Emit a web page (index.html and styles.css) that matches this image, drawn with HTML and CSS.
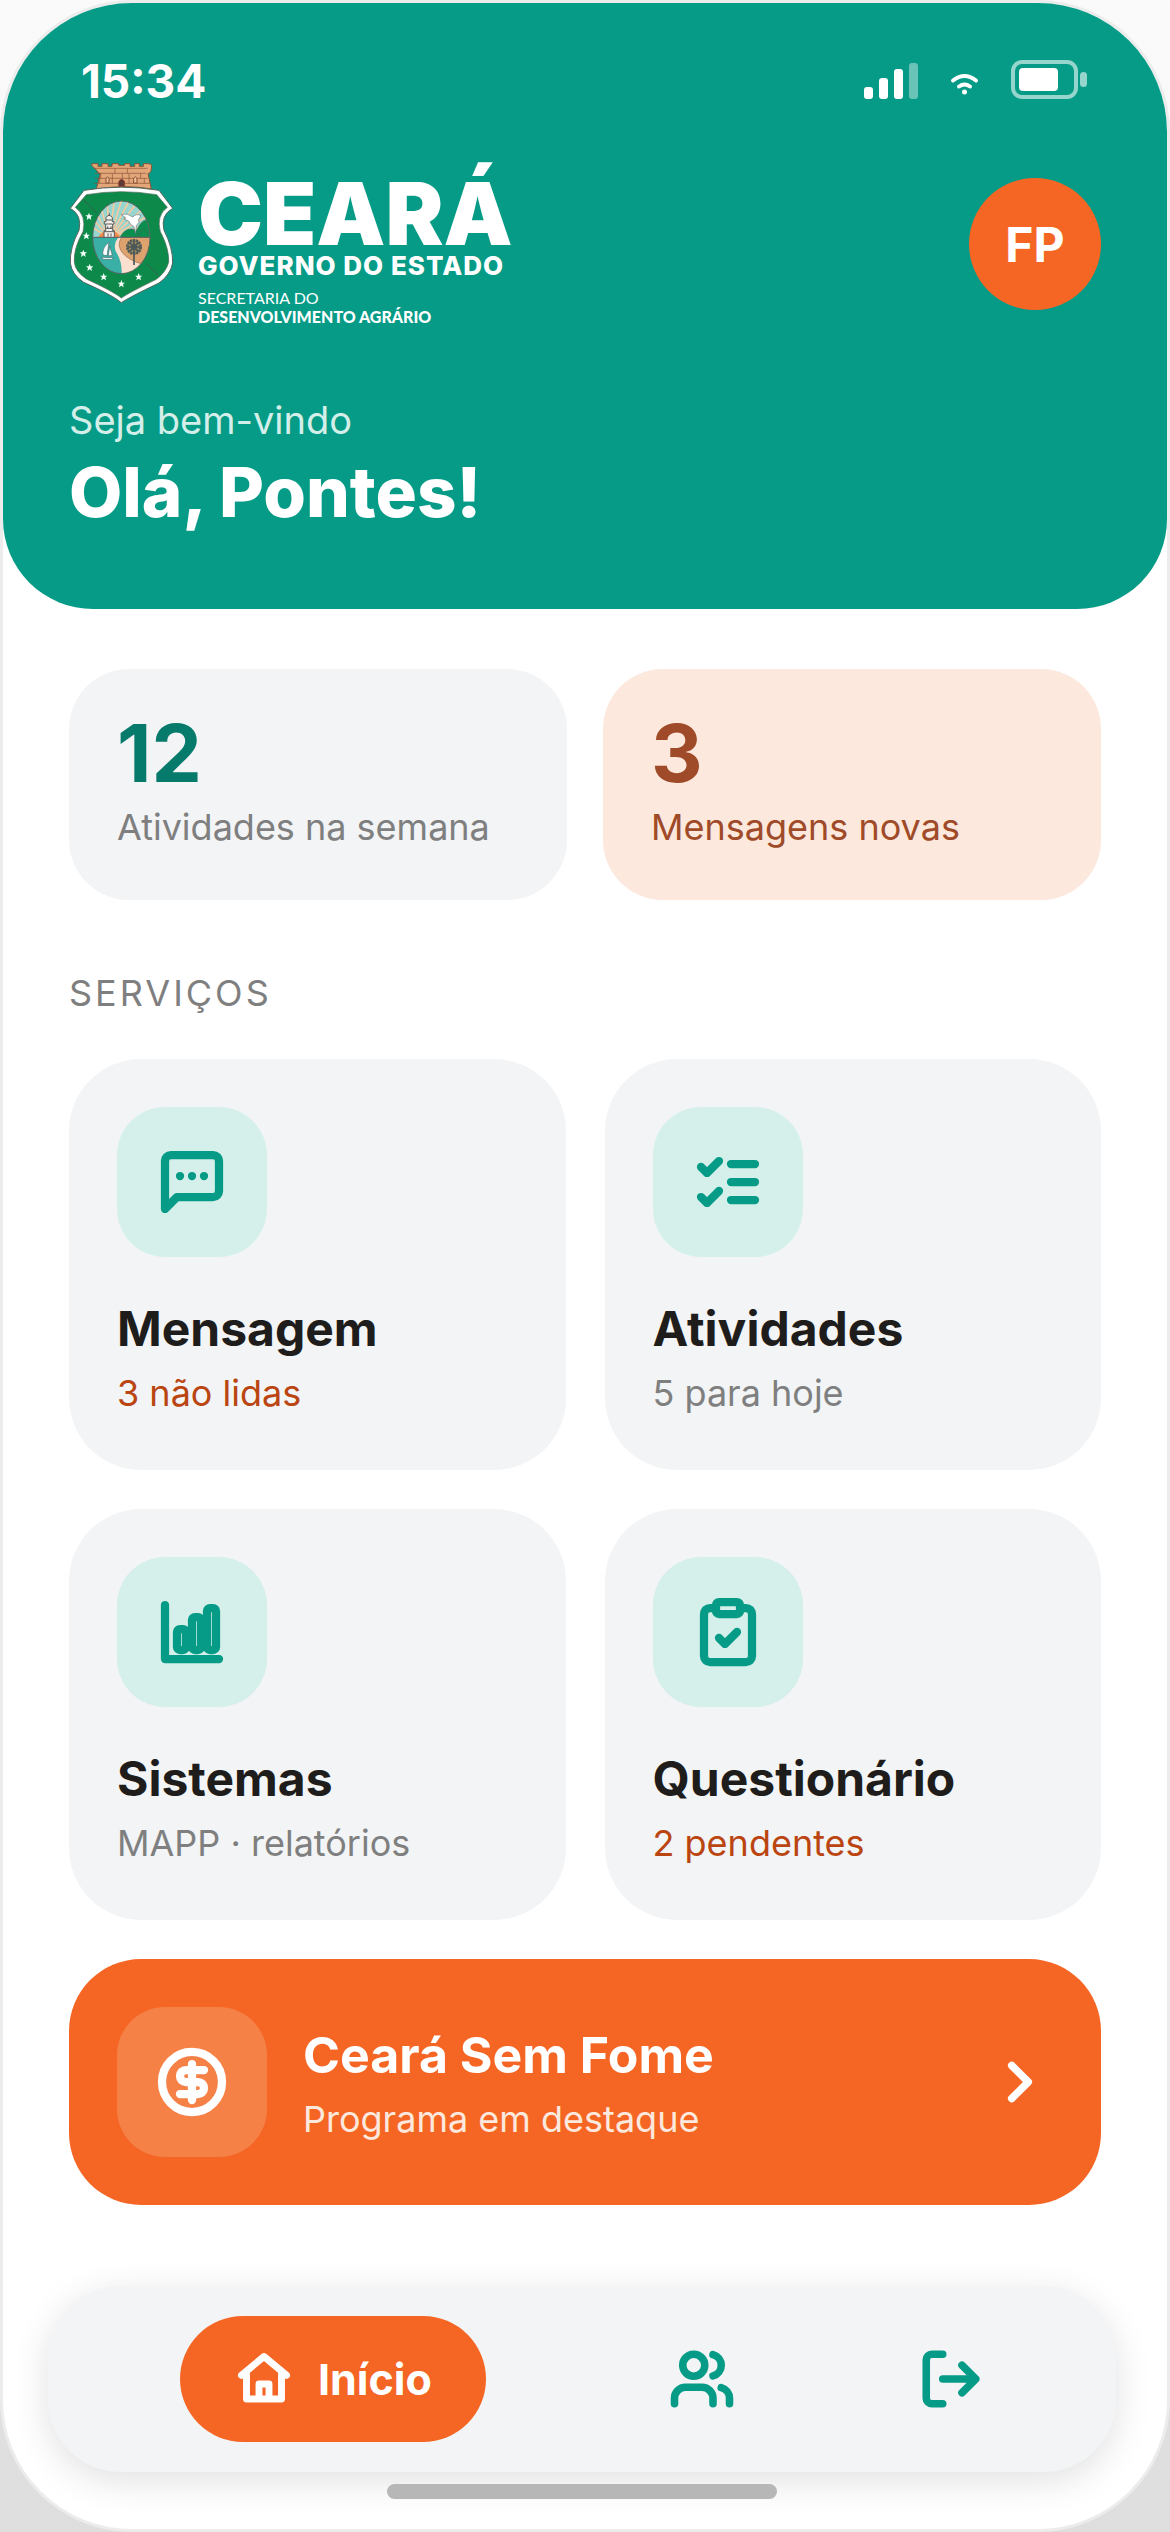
FILE: index.html
```html
<!DOCTYPE html>
<html lang="pt-BR">
<head>
  <meta charset="utf-8">
  <meta name="viewport" content="width=device-width, initial-scale=1">
  <title>Início</title>
  <link rel="stylesheet" href="styles.css">
</head>
<body>
  <div class="screen">
    <header class="header">
      <div class="status">
        <span class="status-time">15:34</span>
        <svg class="status-icons" viewBox="0 0 225 42" aria-hidden="true">
          <g fill="#fff">
            <rect x="0" y="27" width="9" height="12" rx="3"/>
            <rect x="15" y="18" width="9" height="21" rx="3"/>
            <rect x="30" y="9" width="9" height="30" rx="3"/>
            <rect x="45" y="3" width="9" height="36" rx="3" opacity=".4"/>
            <rect x="155" y="8" width="39" height="23" rx="4"/>
            <circle cx="100.500" cy="32" r="2.500"/>
          </g>
          <g fill="none" stroke="#fff" stroke-width="4" stroke-linecap="round">
            <path d="M89 20.500Q100.500 11.500 112 20.500"/>
            <path d="M95 26.500Q100.500 22.500 106 26.500"/>
          </g>
          <rect x="149" y="2" width="63" height="35" rx="9" fill="none" stroke="#fff" stroke-width="4" opacity=".58"/>
          <rect x="216" y="12" width="7" height="15" rx="3.500" fill="#fff" opacity=".58"/>
        </svg>
      </div>
      <div class="brand-row">
        <div class="brand">
          <svg class="crest" viewBox="30 33 315 429" aria-hidden="true">
            <path d="M97 42q0-4 6-4h14v8h12v-8h18v8h12v-8h20v5h18v-5h16v8h14v-8h14v8h12v-8h14q12 0 11 6l-2 16q-2 6-9 8l10 46q-74-14-165 0l12-46q-8-2-9-8z" fill="#e3a678" stroke="#8a5338" stroke-width="3"/>
            <path d="M106 52h160M108 67h154M108 82h158M104 97h168M125 67v15M168 52v15M205 52v15M245 67v15M122 82v15M160 67v30M210 67v30M256 82v15M190 67v15" stroke="#8a5338" stroke-width="2" fill="none"/>
            <path d="M141 96V82q5-9 9 0v14zM224 96V82q5-9 10 0v14z" fill="#efc09a" stroke="#8a4a2c" stroke-width="3"/>
            <path d="M179 106V92q9-14 18 0v14z" fill="#5d3a36" stroke="#a33a20" stroke-width="2"/>
            <path d="M75 118Q187 99 300 118L341 172Q304 192 315 238Q342 290 341 336Q334 372 300 396Q212 438 187 455Q160 432 74 394Q38 370 34 336Q32 290 60 238Q70 192 34 172Z" fill="#fff" stroke="#52665b" stroke-width="3"/>
            <path d="M82 131Q187 113 293 131L325 169Q291 194 304 242Q331 292 329 334Q321 364 292 385Q210 425 187 441Q164 422 82 384Q49 362 46 334Q43 292 72 242Q83 194 49 169Z" fill="#0d8a49" stroke="#52665b" stroke-width="2"/>
            <path d="M72 145l42 42M262 338l36 34" stroke="#375f50" stroke-width="3"/>
            <clipPath id="oval"><ellipse cx="187" cy="259" rx="86" ry="109"/></clipPath>
            <g clip-path="url(#oval)">
              <path d="M100 150h174v109H100z" fill="#97d5cf"/>
              <g stroke="#f3c9a0" stroke-width="5">
                <path d="M152 262L96 226M152 262L98 200M152 262L106 176M152 262L122 156M152 262L144 146M152 262L166 146M152 262L188 146M152 262L212 146M152 262L236 152M152 262L258 168M152 262L274 190M152 262L276 214"/>
              </g>
              <path d="M118 260a34 28 0 0 1 66 0z" fill="#f38a4a"/>
              <path d="M183 260q12-26 34-26 10 0 16 4 14-28 26-30 8 0 16 12v40z" fill="#0b8f4e" stroke="#3d6a58" stroke-width="2"/>
              <path d="M232 240l10 18M256 228l-20 28M256 236l14 12" stroke="#3d6a58" stroke-width="2"/>
              <path d="M100 259h90l-14 40 18 70h-94z" fill="#3aafa5"/>
              <path d="M178 259h96v112h-86q2-40-18-70-8-22 8-42z" fill="#fbe0d0"/>
              <path d="M188 259h88v56l-26 24q-40-10-60-34-18-24-2-46z" fill="#dda26d" stroke="#9b6a4a" stroke-width="2"/>
              <path d="M100 259h174" stroke="#5b6063" stroke-width="3"/>
            </g>
            <ellipse cx="187" cy="259" rx="86" ry="109" fill="none" stroke="#566563" stroke-width="3"/>
            <path d="M135 259v-20h5v-20h-4v-7h5v-12q9-14 19 0v12h5v7h-4v20h5v20z" fill="#f4efe8" stroke="#555a5e" stroke-width="3"/>
            <path d="M151 194v-7M141 207h18M141 219h18M140 232h20M135 242h30M146 226v8M156 226v8M147 247v10M156 247v10" stroke="#555a5e" stroke-width="3"/>
            <path d="M186 190q20-5 35 8 12-12 25-4l-7 11 1 9-8 10-2 24-6-22q-13-6-15-16l-15-6 7-3z" fill="#fff" stroke="#64777a" stroke-width="2"/>
            <path d="M150 274l-6 40q-8 0-13-4 0-22 19-36zM152 285l8 28-12 2zM126 319l38 1-6 5h-24z" fill="#fff" stroke="#4a6d74" stroke-width="2"/>
            <circle cx="225" cy="288" r="20" fill="#9a8a62" stroke="#4c5857" stroke-width="8" stroke-dasharray="7 2"/>
            <circle cx="225" cy="288" r="9" fill="#4c5857"/>
            <path d="M225 270v72M207 288h36M212 275l26 26M238 275l-26 26" stroke="#4c5857" stroke-width="5"/>
            <g fill="#f4fffa">
              <path id="star" d="M90 185l3 8h8l-6 5 2 9-7-5-7 5 2-9-6-5h8z"/>
              <use href="#star" x="-8" y="58"/>
              <use href="#star" x="-17" y="111"/>
              <use href="#star" x="2" y="153"/>
              <use href="#star" x="44" y="181"/>
              <use href="#star" x="97" y="202"/>
              <use href="#star" x="149" y="181"/>
            </g>
          </svg>
          <div class="brand-text">
            <span class="brand-name">CEARÁ</span>
            <span class="brand-gov">GOVERNO DO ESTADO</span>
            <span class="brand-sec">SECRETARIA DO</span>
            <span class="brand-dept">DESENVOLVIMENTO AGRÁRIO</span>
          </div>
        </div>
        <button class="avatar" type="button">FP</button>
      </div>
      <p class="welcome">Seja bem-vindo</p>
      <h1 class="greeting">Olá, Pontes!</h1>
    </header>

    <main class="content">
      <section class="stats">
        <div class="stat">
          <strong class="stat-value">12</strong>
          <span class="stat-label">Atividades na semana</span>
        </div>
        <div class="stat stat-alert">
          <strong class="stat-value">3</strong>
          <span class="stat-label">Mensagens novas</span>
        </div>
      </section>

      <h2 class="section-title">SERVIÇOS</h2>

      <section class="services">
        <a class="service" href="#mensagem">
          <span class="tile">
            <svg class="icon icon-lg" viewBox="0 0 24 24" aria-hidden="true"><path d="M21 15a2 2 0 0 1-2 2H7l-4 4V5a2 2 0 0 1 2-2h14a2 2 0 0 1 2 2z"/><path d="M8 10h.01M12 10h.01M16 10h.01"/></svg>
          </span>
          <span class="service-name">Mensagem</span>
          <span class="service-info pending">3 não lidas</span>
        </a>
        <a class="service" href="#atividades">
          <span class="tile">
            <svg class="icon icon-lg" viewBox="0 0 24 24" aria-hidden="true"><path d="m3 7 2 2 4-4M3 17l2 2 4-4M13 6h8M13 12h8M13 18h8"/></svg>
          </span>
          <span class="service-name">Atividades</span>
          <span class="service-info">5 para hoje</span>
        </a>
        <a class="service" href="#sistemas">
          <span class="tile">
            <svg class="icon icon-lg" viewBox="0 0 24 24" aria-hidden="true"><path d="M3 3v18h18"/><rect x="7" y="11" width="3" height="7" rx="1"/><rect x="12" y="7" width="3" height="11" rx="1"/><rect x="17" y="4" width="3" height="14" rx="1"/></svg>
          </span>
          <span class="service-name">Sistemas</span>
          <span class="service-info">MAPP · relatórios</span>
        </a>
        <a class="service" href="#questionario">
          <span class="tile">
            <svg class="icon icon-lg" viewBox="0 0 24 24" aria-hidden="true"><rect x="8" y="2" width="8" height="4" rx="1"/><path d="M16 4h2a2 2 0 0 1 2 2v14a2 2 0 0 1-2 2H6a2 2 0 0 1-2-2V6a2 2 0 0 1 2-2h2"/><path d="m9 14 2 2 4-4"/></svg>
          </span>
          <span class="service-name">Questionário</span>
          <span class="service-info pending">2 pendentes</span>
        </a>
      </section>

      <a class="banner" href="#ceara-sem-fome">
        <span class="tile tile-light">
          <svg class="icon icon-lg" viewBox="0 0 24 24" aria-hidden="true"><circle cx="12" cy="12" r="10"/><path d="M16 8h-6a2 2 0 1 0 0 4h4a2 2 0 1 1 0 4H8M12 18V6"/></svg>
        </span>
        <span class="banner-text">
          <span class="banner-name">Ceará Sem Fome</span>
          <span class="banner-info">Programa em destaque</span>
        </span>
        <svg class="icon icon-md" viewBox="0 0 24 24" aria-hidden="true"><path d="m9 18 6-6-6-6"/></svg>
      </a>
    </main>

    <footer class="footer">
      <nav class="nav">
        <a class="nav-active" href="#inicio">
          <svg class="icon icon-sm" viewBox="0 0 24 24" aria-hidden="true"><path d="M3 10.500 12 3l9 7.500M5 9.500V20h14V9.500M10 20v-6h4v6"/></svg>
          Início
        </a>
        <a class="nav-item" href="#pessoas" aria-label="Pessoas">
          <svg class="icon icon-md" viewBox="0 0 24 24" aria-hidden="true"><path d="M16 21v-2a4 4 0 0 0-4-4H6a4 4 0 0 0-4 4v2"/><circle cx="9" cy="7" r="4"/><path d="M22 21v-2a4 4 0 0 0-3-3.870M16 3.130a4 4 0 0 1 0 7.750"/></svg>
        </a>
        <a class="nav-item" href="#sair" aria-label="Sair">
          <svg class="icon icon-md" viewBox="0 0 24 24" aria-hidden="true"><path d="M9 21H5a2 2 0 0 1-2-2V5a2 2 0 0 1 2-2h4M16 17l5-5-5-5M21 12H9"/></svg>
        </a>
      </nav>
      <div class="home-indicator"></div>
    </footer>
  </div>
</body>
</html>
```
FILE: styles.css
```css
* {
  box-sizing: border-box;
}

body {
  margin: 0;
  min-height: 100vh;
  background: linear-gradient(#fafafa 0%, #f0f0f0 50%, #dedede 100%);
  color: #1f1d1b;
  font-family: Inter, "Liberation Sans", sans-serif;
}

a {
  color: inherit;
  text-decoration: none;
}

p,
h1,
h2 {
  margin: 0;
}

.screen {
  display: flex;
  flex-direction: column;
  min-height: 100vh;
  overflow: hidden;
  border: 3px solid #ececec;
  border-radius: 132px;
  background: #fff;
}

/* Header */

.header {
  padding: 51px 66px 75px;
  border-radius: 0 0 90px 90px;
  background: #069b87;
  color: #fff;
}

.status {
  display: flex;
  align-items: center;
  justify-content: space-between;
  padding: 0 12px;
}

.status-time {
  font-size: 46px;
  font-weight: 700;
  line-height: 54px;
}

.status-icons {
  width: 225px;
  height: 42px;
}

.brand-row {
  display: flex;
  align-items: center;
  justify-content: space-between;
  margin-top: 54px;
}

.brand {
  display: flex;
  align-items: flex-start;
  gap: 24px;
}

.crest {
  width: 105px;
  height: 143px;
}

.brand-text {
  display: flex;
  flex-direction: column;
  padding-top: 14px;
  white-space: nowrap;
}

.brand-name {
  font-size: 87px;
  font-weight: 900;
  line-height: 76px;
}

.brand-gov {
  font-size: 26px;
  font-weight: 800;
  letter-spacing: 1px;
  line-height: 28px;
}

.brand-sec {
  margin-top: 8px;
  font-family: Lato, sans-serif;
  font-size: 16px;
  line-height: 20px;
}

.brand-dept {
  font-family: Lato, sans-serif;
  font-size: 16px;
  font-weight: 900;
  line-height: 18px;
}

.avatar {
  width: 132px;
  height: 132px;
  padding: 0;
  border: 0;
  border-radius: 50%;
  background: #f56624;
  color: #fff;
  font-family: inherit;
  font-size: 48px;
  font-weight: 700;
}

.welcome {
  margin-top: 67px;
  color: #d4efe9;
  font-size: 38px;
  line-height: 54px;
}

.greeting {
  margin-top: 3px;
  font-size: 69px;
  font-weight: 800;
  line-height: 84px;
}

/* Content */

.content {
  padding: 60px 66px 0;
}

.stats {
  display: grid;
  grid-template-columns: 1fr 1fr;
  gap: 36px;
}

.stat {
  display: flex;
  flex-direction: column;
  gap: 5px;
  padding: 42px 48px 46px;
  border-radius: 60px;
  background: #f2f4f6;
}

.stat-value {
  color: #067a6b;
  font-size: 80px;
  font-weight: 700;
  line-height: 84px;
}

.stat-label {
  color: #7f7f7f;
  font-size: 36px;
  line-height: 54px;
}

.stat-alert {
  background: #fce8dd;
}

.stat-alert .stat-value,
.stat-alert .stat-label {
  color: #9f4a28;
}

.section-title {
  margin: 66px 0 39px;
  color: #7f7f7f;
  font-size: 36px;
  font-weight: 400;
  letter-spacing: 3px;
  line-height: 54px;
}

.services {
  display: grid;
  grid-template-columns: 1fr 1fr;
  gap: 39px;
}

.service {
  display: flex;
  flex-direction: column;
  padding: 48px;
  border-radius: 72px;
  background: #f2f4f6;
}

.tile {
  display: flex;
  flex: none;
  align-items: center;
  justify-content: center;
  width: 150px;
  height: 150px;
  border-radius: 48px;
  background: #d5f0ea;
  color: #069b87;
}

.tile-light {
  background: #f68147;
  color: #fff;
}

.icon {
  flex: none;
  fill: none;
  stroke: currentColor;
  stroke-width: 2.75;
  stroke-linecap: round;
  stroke-linejoin: round;
}

.icon-lg {
  width: 72px;
  height: 72px;
}

.icon-md {
  width: 66px;
  height: 66px;
}

.icon-sm {
  width: 60px;
  height: 60px;
}

.service-name {
  margin-top: 42px;
  font-size: 48px;
  font-weight: 700;
  line-height: 60px;
}

.service-info {
  margin-top: 6px;
  color: #7f7f7f;
  font-size: 36px;
  line-height: 57px;
}

.pending {
  color: #ba4511;
}

.banner {
  display: flex;
  align-items: center;
  gap: 36px;
  margin-top: 39px;
  padding: 48px;
  border-radius: 72px;
  background: #f56624;
  color: #fff;
}

.banner-text {
  display: flex;
  flex: 1;
  flex-direction: column;
  gap: 6px;
  padding-top: 8px;
}

.banner-name {
  font-size: 50px;
  font-weight: 700;
  line-height: 60px;
}

.banner-info {
  color: #fce8dd;
  font-size: 36px;
  line-height: 57px;
}

/* Bottom bar */

.footer {
  margin-top: auto;
  padding: 81px 51px 30px 45px;
}

.nav {
  display: flex;
  align-items: center;
  justify-content: space-between;
  padding: 30px 132px;
  border-radius: 72px;
  background: #f2f4f6;
  box-shadow: 0 9px 36px rgba(0, 0, 0, 0.12);
}

.nav-active {
  display: flex;
  align-items: center;
  gap: 24px;
  height: 126px;
  padding: 0 54px;
  border-radius: 63px;
  background: #f56624;
  color: #fff;
  font-size: 43px;
  font-weight: 700;
}

.nav-item {
  display: flex;
  color: #069b87;
}

.home-indicator {
  width: 390px;
  height: 15px;
  margin: 12px auto 0;
  border-radius: 8px;
  background: #b7b7b7;
}
```
